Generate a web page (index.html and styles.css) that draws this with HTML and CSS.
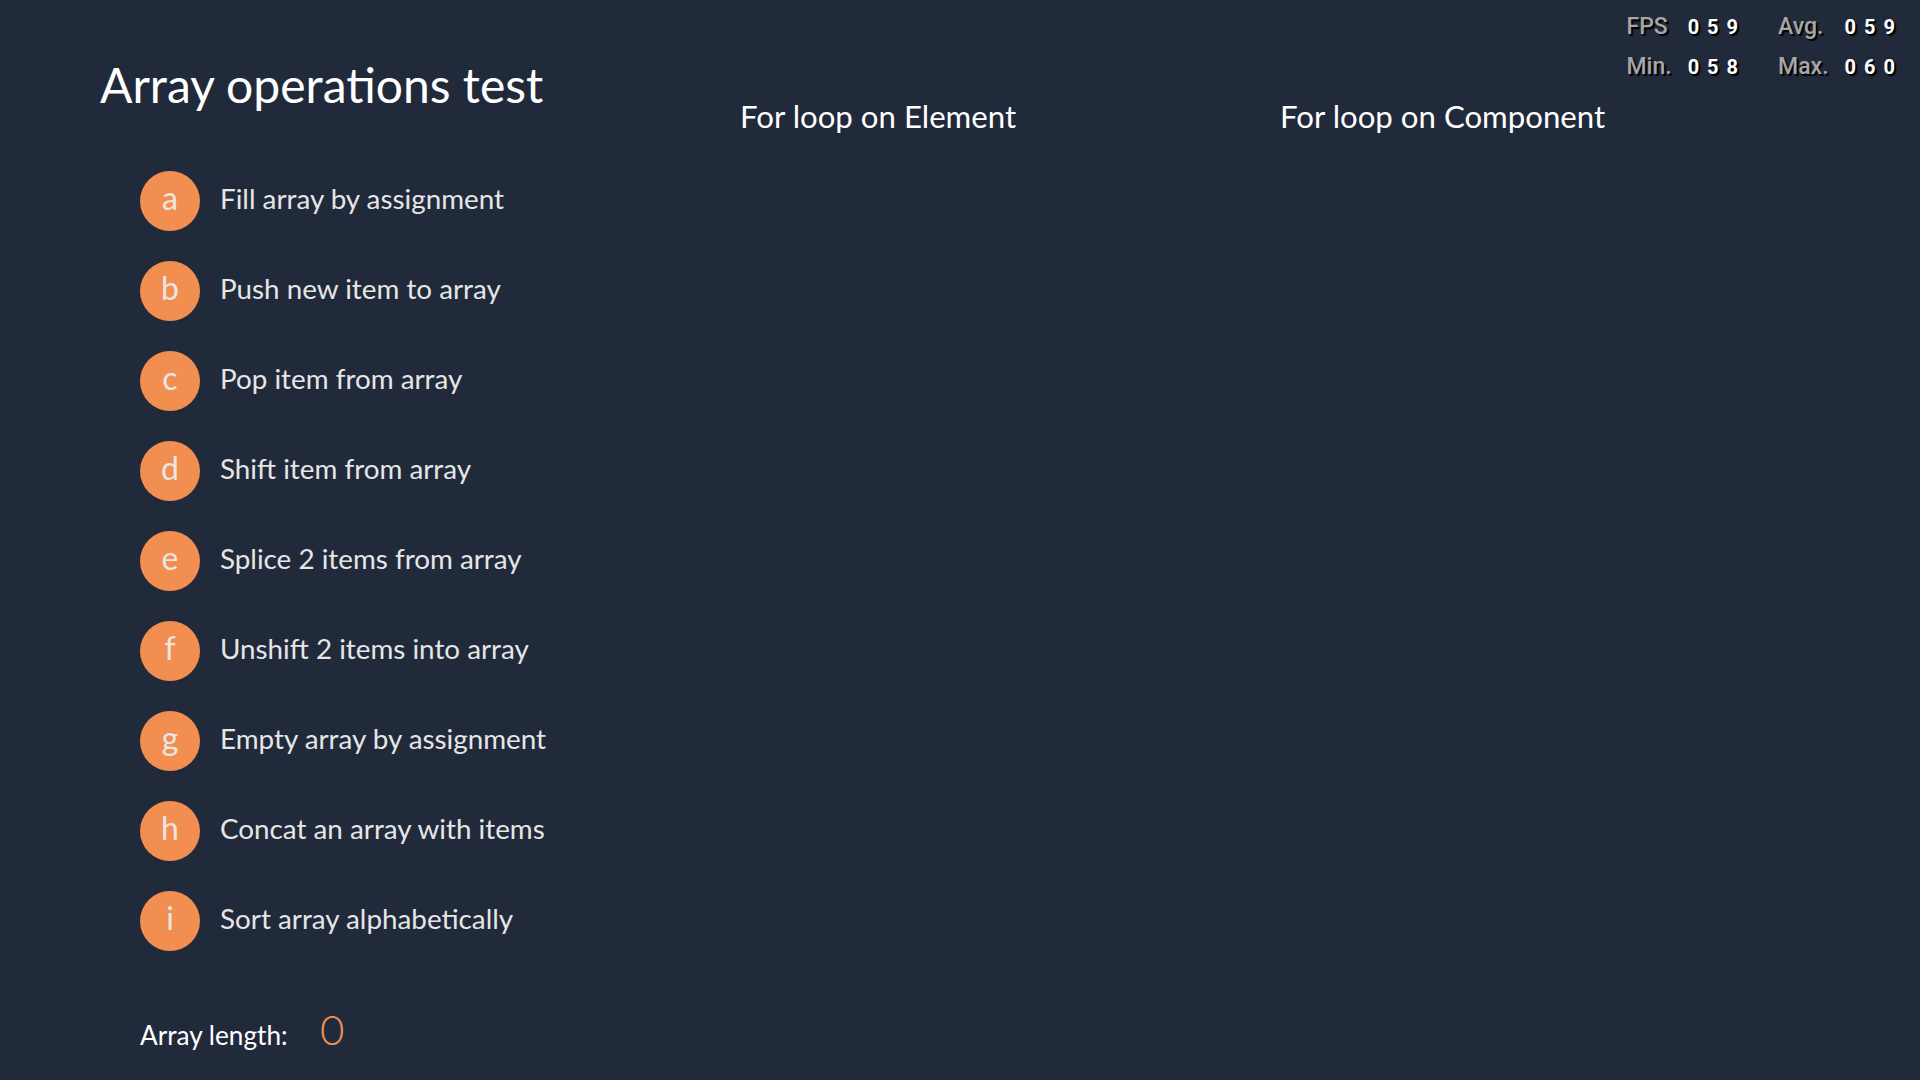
FILE: index.html
```html
<!DOCTYPE html>
<html lang="en">
<head>
<meta charset="utf-8">
<title>Array operations test</title>
<link rel="stylesheet" href="styles.css">
</head>
<body>
<div class="app">
  <section class="controls">
    <h1 class="title">Array operations test</h1>
    <ul class="ops">
      <li class="op"><span class="key">a</span><span class="label">Fill array by assignment</span></li>
      <li class="op"><span class="key">b</span><span class="label">Push new item to array</span></li>
      <li class="op"><span class="key">c</span><span class="label">Pop item from array</span></li>
      <li class="op"><span class="key">d</span><span class="label">Shift item from array</span></li>
      <li class="op"><span class="key">e</span><span class="label">Splice 2 items from array</span></li>
      <li class="op"><span class="key">f</span><span class="label">Unshift 2 items into array</span></li>
      <li class="op"><span class="key">g</span><span class="label">Empty array by assignment</span></li>
      <li class="op"><span class="key">h</span><span class="label">Concat an array with items</span></li>
      <li class="op"><span class="key">i</span><span class="label">Sort array alphabetically</span></li>
    </ul>
    <div class="length"><span class="length-label">Array length:</span><span class="length-value">0</span></div>
  </section>
  <section class="col">
    <h2 class="col-title">For loop on Element</h2>
  </section>
  <section class="col">
    <h2 class="col-title">For loop on Component</h2>
  </section>
</div>
<div class="fps">
  <span class="fps-label">FPS</span><span class="fps-value">059</span>
  <span class="fps-label fps-label-2">Avg.</span><span class="fps-value">059</span>
  <span class="fps-label">Min.</span><span class="fps-value">058</span>
  <span class="fps-label fps-label-2">Max.</span><span class="fps-value">060</span>
</div>
</body>
</html>
```
FILE: styles.css
```css
html, body {
  margin: 0;
  padding: 0;
  height: 100%;
}
body {
  background: #212a3b;
  font-family: "Lato", "Open Sans", sans-serif;
  color: #e6e6e6;
  overflow: hidden;
}
.app {
  display: flex;
  align-items: flex-start;
}
.controls {
  width: 740px;
  flex: none;
  padding-top: 56px;
  box-sizing: border-box;
}
.title {
  margin: 0 0 0 100px;
  font-size: 48px;
  font-weight: 400;
  line-height: 1.2;
  color: #ffffff;
}
.ops {
  list-style: none;
  margin: 42px 0 0 140px;
  padding: 0;
}
.op {
  display: flex;
  align-items: center;
  height: 90px;
  gap: 20px;
}
.key {
  flex: none;
  width: 60px;
  height: 60px;
  border-radius: 50%;
  background: #f28f50;
  color: #ebe6e2;
  font-size: 32px;
  line-height: 54px;
  text-align: center;
}
.label {
  font-size: 27.8px;
  line-height: 1.2;
  color: #e6e6e6;
  position: relative;
  top: -2px;
}
.length {
  display: flex;
  align-items: baseline;
  margin: 38px 0 0 140px;
}
.length-label {
  font-size: 26.2px;
  color: #ffffff;
  width: 180px;
}
.length-value {
  font-size: 42px;
  font-weight: 300;
  line-height: 1.2;
  color: #f28f50;
}
.col {
  width: 540px;
  flex: none;
  padding-top: 98px;
}
.col-title {
  margin: 0;
  font-size: 31.2px;
  font-weight: 400;
  line-height: 1.2;
  color: #ffffff;
}
.fps {
  position: absolute;
  top: 7px;
  right: 17px;
  display: grid;
  grid-template-columns: auto auto auto auto;
  column-gap: 16px;
  font-family: "Roboto", "Liberation Sans", sans-serif;
  line-height: 40px;
  text-shadow: 2px 2px 1px #000;
}
.fps-label {
  color: #a6a6a6;
  font-size: 23px;
  font-weight: 500;
}
.fps-label-2 {
  margin-left: 16px;
}
.fps-value {
  color: #ffffff;
  font-size: 20px;
  font-weight: 700;
  letter-spacing: 8px;
}
```
